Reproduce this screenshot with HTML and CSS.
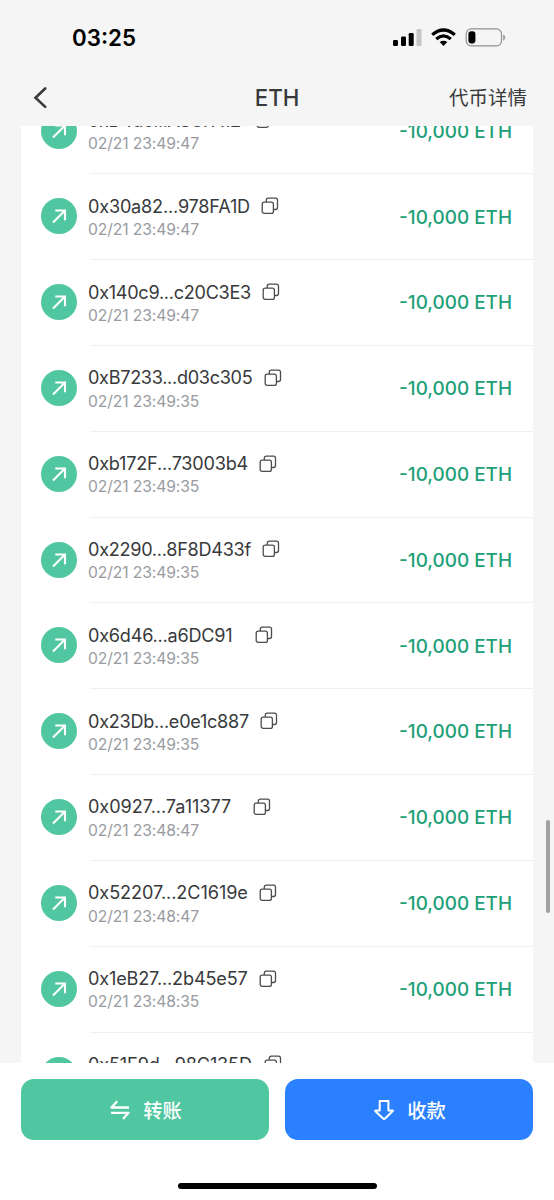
FILE: index.html
```html
<!DOCTYPE html>
<html lang="zh-CN">
<head>
<meta charset="utf-8">
<title>ETH</title>
<link rel="stylesheet" href="styles.css">
</head>
<body>
<div class="screen">
  <header class="status">
    <span class="clock">03:25</span>
    <svg class="status-icons" width="114" height="20" viewBox="0 0 114 20">
      <rect x="1" y="12" width="5" height="6" rx="1.3"/>
      <rect x="9" y="8.5" width="5" height="9.5" rx="1.3"/>
      <rect x="16.7" y="5" width="5" height="13" rx="1.3"/>
      <rect x="24.5" y="1" width="5" height="17" rx="1.3" fill="#c5c5c5"/>
      <g fill="none" stroke="#000" stroke-width="3.2">
        <path d="M40.2 6.7Q51.5-2.7 62.8 6.7"/>
        <path d="M44.2 11Q51.5 4.8 58.8 11"/>
      </g>
      <path d="M47.7 14.1Q51.5 11.2 55.3 14.1L51.5 18z"/>
      <rect x="74.2" y="0.9" width="35.3" height="17" rx="5" fill="none" stroke="#929292" stroke-width="1.2"/>
      <rect x="76.4" y="3.2" width="7" height="12.2" rx="2.8"/>
      <path d="M111.1 6.5q2.2 1 2.2 3t-2.2 3z" fill="#999"/>
    </svg>
  </header>
  <nav class="nav">
    <svg class="back" width="14" height="22" viewBox="0 0 14 22"><path d="M12.2 1.5L2.5 10.7L12.2 19.9"/></svg>
    <h1 class="title">ETH</h1>
    <span class="details">代币详情</span>
  </nav>
  <main class="viewport">
    <div class="list" id="list"></div>
    <div class="scrollbar"></div>
  </main>
  <footer class="footer">
    <div class="actions">
      <button class="button send">
        <svg width="20" height="20" viewBox="0 0 20 20"><path d="M7.2 1.3L1.5 7.5H19M1 12.8H18.5L13 18.9"/></svg>
        <span>转账</span>
      </button>
      <button class="button receive">
        <svg width="20" height="20" viewBox="0 0 20 20"><path d="M5.7 1H14.4V10.4H18.5Q19.3 10.4 18.8 11L10.8 18.7Q10.1 19.3 9.4 18.7L1.4 11.2Q.9 10.4 1.7 10.4H5.7z"/></svg>
        <span>收款</span>
      </button>
    </div>
    <div class="home"></div>
  </footer>
</div>
<script src="app.js"></script>
</body>
</html>
```
FILE: styles.css
```css
* { box-sizing: border-box; }
body { margin: 0; background: #f5f5f5; font-family: Inter, "Noto Sans CJK SC", sans-serif; color: #38393b; }
.screen { width: 554px; height: 1200px; display: flex; flex-direction: column; overflow: hidden; }
.status { height: 70px; flex: none; display: flex; justify-content: space-between; padding: 23px 48px 0 72px; }
.clock { font-size: 22.3px; line-height: 29px; font-weight: 600; color: #000; }
.status-icons { margin-top: 5px; }
.nav { height: 56px; flex: none; display: grid; grid-template-columns: 1fr auto 1fr; align-items: center; padding: 0 27px 0 33px; }
.back { fill: none; stroke: #38393b; stroke-width: 2.6; stroke-linecap: round; }
.title { margin: 0 0 0 -6px; font-size: 22.3px; line-height: 28px; font-weight: 500; }
.details { justify-self: end; font-size: 19.5px; line-height: 28px; font-weight: 400; }
.viewport { height: 937px; flex: none; position: relative; overflow: hidden; padding: 0 21px; }
.list { background: #fff; margin-top: -37.4px; height: 1000px; }
.row { height: 85.82px; display: flex; padding: 0 21px 0 20px; }
.badge { width: 36px; height: 36px; margin-top: 24px; border-radius: 50%; background: #50c7a0; flex: none; }
.badge svg, .copy { display: block; fill: none; }
.badge path { stroke: #fff; stroke-width: 2.1; }
.body { flex: 1; margin-left: 11px; padding-top: 17.8px; position: relative; }
.row .body::after { content: ""; position: absolute; left: 2px; right: -21px; bottom: 0; height: 1px; background: #f0f0f0; }
.head { display: flex; height: 27px; align-items: center; }
.address { font-size: 18.1px; line-height: 26px; white-space: nowrap; }
.copy { stroke: #4b4c4e; stroke-width: 1.3; flex: none; margin: 1px 0 0 -.6px; }
.time { font-size: 15.7px; line-height: 20px; margin-top: .8px; color: #999b9f; white-space: nowrap; letter-spacing: -.12px; }
.amount { position: absolute; right: 0; top: 30.1px; font-size: 18.9px; line-height: 26px; font-weight: 500; color: #20a078; white-space: nowrap; }
.scrollbar { position: absolute; right: 4px; top: 694px; width: 4px; height: 93px; border-radius: 2px; background: #a0a0a0; }
.footer { height: 137px; flex: none; background: #fff; padding: 16px 21px 0; }
.actions { display: grid; grid-template-columns: 1fr 1fr; gap: 16px; }
.button { height: 61px; border: 0; border-radius: 13px; display: flex; align-items: center; justify-content: center; gap: 13px; color: #fff; font: 500 19.3px/28px "Noto Sans CJK SC", sans-serif; padding: 0 0 0 2px; }
.send { background: #50c7a0; }
.receive { background: #2a80ff; }
.button svg { fill: none; stroke: #fff; stroke-width: 2; stroke-linejoin: round; }
.send svg { stroke-width: 2.3; }
.home { width: 199px; height: 6px; border-radius: 3px; background: #000; margin: 43px auto 0; }
```
FILE: app.js
```js
// Each entry: address, time, width of the address column in pixels, letter spacing.
const transfers = [
  ["0xD4d3...A8CFA12", "02/21 23:49:47", 168.5, -0.45],
  ["0x30a82...978FA1D", "02/21 23:49:47", 174, -0.19],
  ["0x140c9...c20C3E3", "02/21 23:49:47", 175, -0.28],
  ["0xB7233...d03c305", "02/21 23:49:35", 177, -0.31],
  ["0xb172F...73003b4", "02/21 23:49:35", 172, -0.22],
  ["0x2290...8F8D433f", "02/21 23:49:35", 175, -0.28],
  ["0x6d46...a6DC91", "02/21 23:49:35", 167.5, -0.22],
  ["0x23Db...e0e1c887", "02/21 23:49:35", 173, -0.27],
  ["0x0927...7a11377", "02/21 23:48:47", 166, -0.05],
  ["0x52207...2C1619e", "02/21 23:48:47", 172, -0.07],
  ["0x1eB27...2b45e57", "02/21 23:48:35", 172, -0.16],
  ["0x51E9d...98C135D", "02/21 23:48:35", 177, -0.16]
];
document.getElementById("list").innerHTML = transfers.map(([address, time, width, spacing]) => `
  <div class="row">
    <div class="badge"><svg width="36" height="36" viewBox="0 0 36 36"><path d="M12 24.5L24 12.5M14.3 12.5H24V22.2"/></svg></div>
    <div class="body">
      <div class="head">
        <span class="address" style="width:${width}px;letter-spacing:${spacing}px">${address}</span>
        <svg class="copy" width="18" height="18" viewBox="0 0 18 18"><rect x="1.2" y="5.2" width="11.2" height="11.2" rx="2"/><path d="M5.3 5V3.2Q5.3 1.2 7.3 1.2H14.5Q16.5 1.2 16.5 3.2V10.5Q16.5 12.5 14.5 12.5H12.6"/></svg>
      </div>
      <div class="time">${time}</div>
      <div class="amount">-10,000 ETH</div>
    </div>
  </div>`).join("");
```
